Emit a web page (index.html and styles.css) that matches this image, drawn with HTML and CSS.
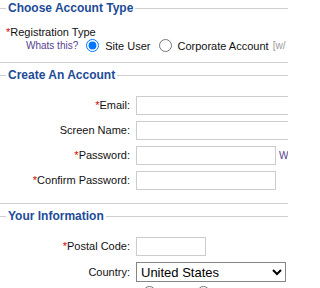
FILE: index.html
```html
<!DOCTYPE html>
<html>
<head>
<meta charset="utf-8">
<link rel="stylesheet" href="styles.css">
</head>
<body>
<div class="page">
<fieldset class="fs">
  <legend>Choose Account Type</legend>
  <div class="regtype"><span class="req">*</span>Registration Type</div>
  <div class="radios">
    <a class="help">Whats this?</a>
    <input type="radio" name="t" checked><span class="opt">Site User</span>
    <input type="radio" name="t"><span class="opt">Corporate Account</span>
    <span class="note">[w/</span>
  </div>
</fieldset>

<fieldset class="fs">
  <legend>Create An Account</legend>
  <div class="grid">
    <label class="lbl"><span class="req">*</span>Email:</label>
    <div class="cell"><input class="txt wide" type="text"></div>
    <label class="lbl">Screen Name:</label>
    <div class="cell"><input class="txt wide" type="text"></div>
    <label class="lbl"><span class="req">*</span>Password:</label>
    <div class="cell"><input class="txt mid" type="password"><a class="help side">W</a></div>
    <label class="lbl"><span class="req">*</span>Confirm Password:</label>
    <div class="cell"><input class="txt mid" type="password"></div>
  </div>
</fieldset>

<fieldset class="fs">
  <legend>Your Information</legend>
  <div class="grid">
    <label class="lbl"><span class="req">*</span>Postal Code:</label>
    <div class="cell"><input class="txt short" type="text"></div>
    <label class="lbl">Country:</label>
    <div class="cell">
      <span class="selwrap">
        <select class="sel"><option>United States</option></select>
        <svg class="chev" width="10" height="7" viewBox="0 0 10 7"><polyline points="1,1 5,5 9,1" fill="none" stroke="#000" stroke-width="2"/></svg>
      </span>
    </div>
    <span class="lbl"></span>
    <div class="cell gender">
      <input type="radio" name="g">
      <input type="radio" name="g">
    </div>
  </div>
</fieldset>
</div>
</body>
</html>
```

FILE: styles.css
```css
html, body {
  margin: 0;
  padding: 0;
  overflow: hidden;
  background: #fff;
}
body {
  font-family: Arial, "Liberation Sans", sans-serif;
  font-size: 11px;
  color: #111;
}
.page {
  width: 288px;
  height: 288px;
  overflow: hidden;
  padding-top: 1px;
  box-sizing: border-box;
}
.fs {
  margin: 0;
  min-width: 0;
  padding: 0 0 10px 6px;
  border: none;
  border-top: 1px solid #cfcfcf;
  border-bottom: 1px solid #cfcfcf;
  white-space: nowrap;
}
.fs + .fs {
  margin-top: 5px;
  padding-bottom: 13px;
}
legend {
  font-weight: bold;
  font-size: 12px;
  line-height: 14px;
  padding: 0 2px;
  color: #1d4b99;
}
.req {
  color: #d40000;
}
.regtype {
  margin-top: 11px;
  line-height: 13px;
}
.radios {
  display: flex;
  align-items: center;
  height: 13px;
  margin-left: 20px;
}
.help {
  font-size: 10px;
  color: #56428f;
}
.radios input[type=radio] {
  width: 13px;
  height: 13px;
  margin: 0 6px 0 8px;
}
.note {
  font-size: 10px;
  color: #999;
  margin-left: 4px;
}
.grid {
  display: grid;
  grid-template-columns: 124px auto;
  column-gap: 6px;
  row-gap: 6px;
  align-items: center;
  margin-top: 14px;
}
.lbl {
  text-align: right;
  line-height: 13px;
}
.cell {
  display: flex;
  align-items: center;
}
.txt {
  box-sizing: border-box;
  height: 19px;
  border: 1px solid #cccccc;
  padding: 0 2px;
  margin: 0;
  background: #fff;
}
.wide { width: 200px; }
.mid { width: 140px; }
.short { width: 70px; }
.side {
  font-size: 10px;
  margin-left: 3px;
}
.selwrap {
  position: relative;
  display: inline-block;
}
.sel {
  appearance: none;
  -webkit-appearance: none;
  box-sizing: border-box;
  width: 150px;
  height: 20px;
  margin: 0;
  padding: 0 0 0 4px;
  border: 1px solid #858585;
  border-radius: 0;
  background: #fff;
  color: #000;
  font-family: Arial, "Liberation Sans", sans-serif;
  font-size: 13px;
}
.chev {
  position: absolute;
  right: 4px;
  top: 7px;
  pointer-events: none;
}
.gender {
  height: 13px;
  margin-top: -2px;
}
.gender input[type=radio] {
  width: 13px;
  height: 13px;
  margin: 0 0 0 7px;
}
.gender input[type=radio] + input[type=radio] {
  margin-left: 41px;
}
```
